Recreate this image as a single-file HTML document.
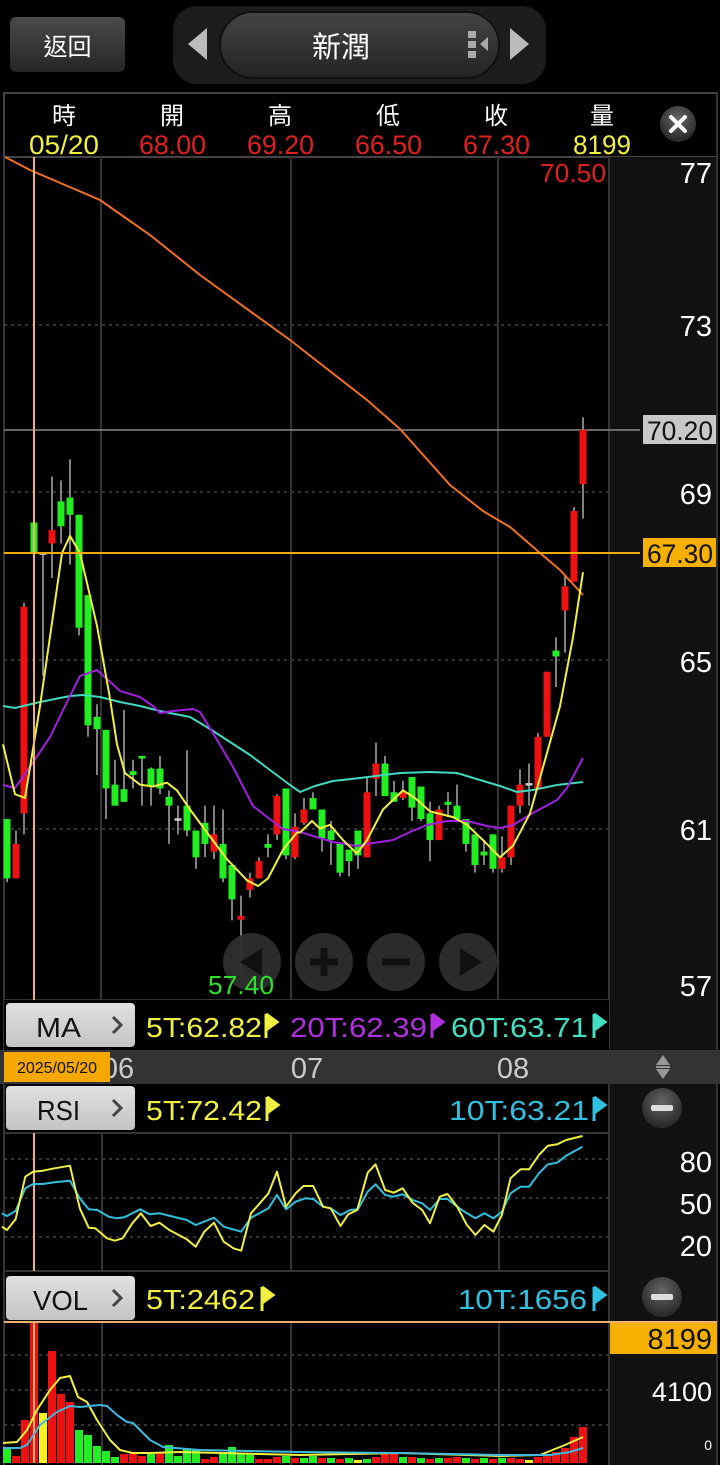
<!DOCTYPE html>
<html><head><meta charset="utf-8">
<style>
html,body{margin:0;padding:0;background:#000;width:720px;height:1465px;overflow:hidden}
body{font-family:"Liberation Sans","Noto Sans CJK TC",sans-serif}
svg text{font-family:"Liberation Sans","Noto Sans CJK TC",sans-serif}
</style></head><body>
<svg id="s" width="720" height="1465" viewBox="0 0 720 1465" xmlns="http://www.w3.org/2000/svg">
<defs>
<linearGradient id="bt" x1="0" y1="0" x2="0" y2="1"><stop offset="0" stop-color="#4a4a4a"/><stop offset="1" stop-color="#262626"/></linearGradient>
<linearGradient id="pill" x1="0" y1="0" x2="0" y2="1"><stop offset="0" stop-color="#454545"/><stop offset="1" stop-color="#232323"/></linearGradient>
<linearGradient id="lb" x1="0" y1="0" x2="0" y2="1"><stop offset="0" stop-color="#e0e0e0"/><stop offset="1" stop-color="#c4c4c4"/></linearGradient>
<radialGradient id="cb" cx="0.5" cy="0.35" r="0.6"><stop offset="0" stop-color="#666"/><stop offset="1" stop-color="#2a2a2a"/></radialGradient>
</defs>
<!-- header -->
<rect x="10" y="17" width="115" height="55" rx="6" fill="url(#bt)"/>
<text x="67.5" y="55" font-size="24" fill="#fff" text-anchor="middle">返回</text>
<rect x="173" y="6" width="373" height="78" rx="24" fill="#1c1c1c"/>
<rect x="220" y="12" width="279" height="66" rx="33" fill="url(#pill)" stroke="#111" stroke-width="2"/>
<polygon points="207,28 207,60 188,44" fill="#bbb"/>
<polygon points="510,28 510,60 529,44" fill="#bbb"/>
<text x="341" y="57" font-size="29" fill="#fff" text-anchor="middle">新潤</text>
<rect x="468" y="31" width="8" height="7" fill="#aaa"/><rect x="468" y="41" width="8" height="7" fill="#aaa"/><rect x="468" y="51" width="8" height="7" fill="#aaa"/>
<polygon points="488,37 488,51 480,44" fill="#aaa"/>
<!-- info row -->
<rect x="4" y="93" width="713" height="64" fill="#000" stroke="#444" stroke-width="2"/>
<g font-size="24" text-anchor="middle" fill="#fff">
<text x="64" y="124">時</text><text x="172" y="124">開</text><text x="280" y="124">高</text><text x="388" y="124">低</text><text x="496" y="124">收</text><text x="602" y="124">量</text>
</g>
<g font-size="27" lengthAdjust="spacingAndGlyphs">
<text x="29" y="154" fill="#f0f040" textLength="70" lengthAdjust="spacingAndGlyphs">05/20</text>
<text x="139" y="154" fill="#e02020" textLength="67" lengthAdjust="spacingAndGlyphs">68.00</text>
<text x="247" y="154" fill="#e02020" textLength="67" lengthAdjust="spacingAndGlyphs">69.20</text>
<text x="355" y="154" fill="#e02020" textLength="67" lengthAdjust="spacingAndGlyphs">66.50</text>
<text x="463" y="154" fill="#e02020" textLength="67" lengthAdjust="spacingAndGlyphs">67.30</text>
<text x="573" y="154" fill="#f0f040" textLength="58" lengthAdjust="spacingAndGlyphs">8199</text>
</g>
<circle cx="678" cy="124" r="18" fill="url(#cb)"/>
<path d="M671,117 L685,131 M685,117 L671,131" stroke="#fff" stroke-width="4" stroke-linecap="round"/>
<!-- right axis panel -->
<rect x="609" y="157" width="108" height="1308" fill="#111"/>
<line x1="609" y1="157" x2="609" y2="1465" stroke="#333" stroke-width="2"/>
<line x1="717" y1="93" x2="717" y2="1465" stroke="#333" stroke-width="2"/>
<line x1="4" y1="157" x2="4" y2="1465" stroke="#333" stroke-width="2"/>
<!-- main grid -->
<g stroke="#444" stroke-width="1.5" stroke-dasharray="3,4">
<line x1="4" y1="325" x2="608" y2="325"/><line x1="4" y1="492" x2="608" y2="492"/><line x1="4" y1="660" x2="608" y2="660"/><line x1="4" y1="829" x2="608" y2="829"/>
</g>
<g stroke="#333" stroke-width="2">
<line x1="101" y1="157" x2="101" y2="1000"/><line x1="291" y1="157" x2="291" y2="1000"/><line x1="498" y1="157" x2="498" y2="1000"/>
<line x1="4" y1="1000" x2="608" y2="1000"/>
</g>
<line x1="4" y1="430" x2="640" y2="430" stroke="#888" stroke-width="1.5"/>
<g id="candles"></g>
<polyline fill="none" stroke="#f07020" stroke-width="2" points="5,157 30,170 100,200 150,235 200,275 290,340 367,400 400,429 450,485 483,511 510,527 540,553 560,570 583,595"/>
<polyline fill="none" stroke="#40d8c0" stroke-width="2" points="3,706 15,708 40,702 70,696 83,695 100,697 120,702 140,706 160,711 190,717 210,729 230,742 250,755 270,770 290,785 300,792 315,786 333,781 360,778 400,773 430,772 457,773 480,780 500,786 517,792 533,790 557,785 583,782"/>
<polyline fill="none" stroke="#a020e0" stroke-width="2" points="3,785 15,788 30,767 50,737 67,702 80,676 97,670 107,679 120,691 140,697 153,706 160,713 173,711 193,709 200,712 213,733 233,767 253,806 267,817 283,829 300,832 313,836 333,842 357,846 367,844 393,840 410,832 427,825 447,821 467,821 487,826 500,828 513,825 533,813 557,800 567,788 583,758"/>
<g id="malines"></g>
<line x1="4" y1="553" x2="640" y2="553" stroke="#f5a800" stroke-width="2"/>
<line x1="34" y1="157" x2="34" y2="1050" stroke="#f0b070" stroke-width="2"/>
<!-- zoom buttons -->
<g fill="#2e2e2e" opacity="0.95">
<circle cx="252" cy="962" r="29"/><circle cx="324" cy="962" r="29"/><circle cx="396" cy="962" r="29"/><circle cx="468" cy="962" r="29"/>
</g>
<polygon points="262,948 262,976 240,962" fill="#111"/>
<path d="M324,948 V976 M310,962 H338" stroke="#111" stroke-width="7"/>
<path d="M382,962 H410" stroke="#111" stroke-width="7"/>
<polygon points="460,948 460,976 482,962" fill="#111"/>
<text x="540" y="182" font-size="26" fill="#e02020" textLength="66" lengthAdjust="spacingAndGlyphs">70.50</text>
<text x="208" y="994" font-size="26" fill="#30e030" textLength="66" lengthAdjust="spacingAndGlyphs">57.40</text>
<!-- right labels -->
<g font-size="29" fill="#fff" text-anchor="end">
<text x="712" y="183">77</text><text x="712" y="336">73</text><text x="712" y="504">69</text><text x="712" y="672">65</text><text x="712" y="840">61</text><text x="712" y="996">57</text>
</g>
<rect x="643" y="415" width="73" height="29" fill="#c8c8c8"/>
<text x="647" y="440" font-size="27" fill="#111" textLength="66" lengthAdjust="spacingAndGlyphs">70.20</text>
<rect x="643" y="538" width="73" height="29" fill="#f5b000"/>
<text x="647" y="563" font-size="27" fill="#111" textLength="66" lengthAdjust="spacingAndGlyphs">67.30</text>
<!-- MA row -->
<rect x="4" y="1000" width="605" height="50" fill="#000"/>
<rect x="6" y="1003" width="129" height="44" rx="4" fill="url(#lb)"/>
<text x="36" y="1037" font-size="28" fill="#111" textLength="45" lengthAdjust="spacingAndGlyphs">MA</text>
<path d="M113,1017 L121,1025 L113,1033" stroke="#444" stroke-width="3" fill="none"/>
<g font-size="28">
<text x="146" y="1037" fill="#f0f040" textLength="116" lengthAdjust="spacingAndGlyphs">5T:62.82</text>
<text x="290" y="1037" fill="#b030e0" textLength="137" lengthAdjust="spacingAndGlyphs">20T:62.39</text>
<text x="451" y="1037" fill="#40e0c0" textLength="137" lengthAdjust="spacingAndGlyphs">60T:63.71</text>
</g>
<path d="M266,1014 V1038 M266,1014 L277,1022 L266,1030" stroke="#f0f040" stroke-width="3" fill="#f0f040"/>
<path d="M432,1014 V1038 M432,1014 L443,1022 L432,1030" stroke="#b030e0" stroke-width="3" fill="#b030e0"/>
<path d="M594,1014 V1038 M594,1014 L605,1022 L594,1030" stroke="#40e0c0" stroke-width="3" fill="#40e0c0"/>
<!-- date bar -->
<rect x="0" y="1050" width="720" height="34" fill="#333"/>
<g font-size="29" fill="#ccc" text-anchor="middle"><text x="118" y="1078">06</text><text x="307" y="1078">07</text><text x="513" y="1078">08</text></g>
<rect x="4" y="1052" width="106" height="30" fill="#f5a800"/>
<text x="57" y="1073" font-size="16" fill="#111" text-anchor="middle">2025/05/20</text>
<polygon points="663,1055 656,1065 670,1065" fill="#999"/><rect x="656" y="1066" width="14" height="2" fill="#999"/><polygon points="663,1079 656,1069 670,1069" fill="#999"/>
<!-- RSI row -->
<rect x="6" y="1086" width="129" height="44" rx="4" fill="url(#lb)"/>
<text x="37" y="1120" font-size="28" fill="#111" textLength="43" lengthAdjust="spacingAndGlyphs">RSI</text>
<path d="M113,1100 L121,1108 L113,1116" stroke="#444" stroke-width="3" fill="none"/>
<text x="146" y="1120" font-size="28" fill="#f0f040" textLength="116" lengthAdjust="spacingAndGlyphs">5T:72.42</text>
<text x="449" y="1120" font-size="28" fill="#30c0e0" textLength="140" lengthAdjust="spacingAndGlyphs">10T:63.21</text>
<path d="M267,1097 V1121 M267,1097 L278,1105 L267,1113" stroke="#f0f040" stroke-width="3" fill="#f0f040"/>
<path d="M594,1097 V1121 M594,1097 L605,1105 L594,1113" stroke="#30c0e0" stroke-width="3" fill="#30c0e0"/>
<circle cx="662" cy="1108" r="20" fill="url(#cb)"/><rect x="651" y="1105" width="22" height="6" rx="2" fill="#ddd"/>
<line x1="4" y1="1133" x2="608" y2="1133" stroke="#333" stroke-width="2"/>
<line x1="4" y1="1271" x2="608" y2="1271" stroke="#333" stroke-width="2"/>
<g stroke="#444" stroke-width="1.5" stroke-dasharray="3,4">
<line x1="4" y1="1159" x2="608" y2="1159"/><line x1="4" y1="1198" x2="608" y2="1198"/><line x1="4" y1="1237" x2="608" y2="1237"/>
</g>
<g stroke="#333" stroke-width="2"><line x1="102" y1="1133" x2="102" y2="1271"/><line x1="291" y1="1133" x2="291" y2="1271"/><line x1="499" y1="1133" x2="499" y2="1271"/></g>
<line x1="34" y1="1133" x2="34" y2="1271" stroke="#f0b070" stroke-width="2"/>
<g id="rsi"></g>
<g font-size="29" fill="#fff" text-anchor="end"><text x="712" y="1172">80</text><text x="712" y="1214">50</text><text x="712" y="1256">20</text></g>
<!-- VOL row -->
<rect x="6" y="1276" width="129" height="44" rx="4" fill="url(#lb)"/>
<text x="33" y="1310" font-size="28" fill="#111" textLength="55" lengthAdjust="spacingAndGlyphs">VOL</text>
<path d="M113,1290 L121,1298 L113,1306" stroke="#444" stroke-width="3" fill="none"/>
<text x="146" y="1309" font-size="28" fill="#f0f040" textLength="109" lengthAdjust="spacingAndGlyphs">5T:2462</text>
<text x="458" y="1309" font-size="28" fill="#30c0e0" textLength="129" lengthAdjust="spacingAndGlyphs">10T:1656</text>
<path d="M262,1287 V1311 M262,1287 L273,1295 L262,1303" stroke="#f0f040" stroke-width="3" fill="#f0f040"/>
<path d="M594,1287 V1311 M594,1287 L605,1295 L594,1303" stroke="#30c0e0" stroke-width="3" fill="#30c0e0"/>
<circle cx="662" cy="1297" r="20" fill="url(#cb)"/><rect x="651" y="1294" width="22" height="6" rx="2" fill="#ddd"/>
<g stroke="#444" stroke-width="1.5" stroke-dasharray="3,4">
<line x1="4" y1="1355" x2="608" y2="1355"/><line x1="4" y1="1390" x2="608" y2="1390"/><line x1="4" y1="1425" x2="608" y2="1425"/>
</g>
<g stroke="#333" stroke-width="2"><line x1="102" y1="1322" x2="102" y2="1465"/><line x1="291" y1="1322" x2="291" y2="1465"/><line x1="499" y1="1322" x2="499" y2="1465"/></g>
<g id="vol"></g>
<line x1="4" y1="1322" x2="717" y2="1322" stroke="#f0b070" stroke-width="2"/>
<rect x="610" y="1323" width="107" height="31" fill="#f5b000"/>
<text x="712" y="1349" font-size="29" fill="#111" text-anchor="end">8199</text>
<text x="712" y="1401" font-size="27" fill="#fff" text-anchor="end">4100</text>
<text x="712" y="1450" font-size="14" fill="#fff" text-anchor="end">0</text>
</svg>
<script>
var NS="http://www.w3.org/2000/svg";
function el(p,t,a){var e=document.createElementNS(NS,t);for(var k in a)e.setAttribute(k,a[k]);p.appendChild(e);return e;}
var Y=function(z){return 400+z*0.3827;};
var C=[[7,1095,1250,1095,1260,'g'],[16,1160,1250,1125,1250,'r'],[24,540,1080,530,1135,'r'],[34,320,400,320,400,'g'],[43,398,404,400,720,'w'],[52,340,375,200,465,'r'],[61,265,330,210,375,'g'],[70,255,300,155,430,'g'],[79,300,595,300,615,'g'],[88,510,850,510,880,'g'],[97,828,860,795,980,'g'],[106,862,1015,862,1095,'g'],[115,1005,1060,940,1060,'g'],[124,1017,1050,810,1050,'g'],[133,970,980,940,1015,'g'],[142,930,937,930,1060,'g'],[151,963,1010,960,1060,'g'],[160,963,1015,930,1030,'g'],[169,1037,1060,1020,1160,'g'],[178,1093,1097,1060,1135,'w'],[187,1060,1125,915,1140,'g'],[196,1125,1195,1125,1225,'g'],[205,1105,1160,1060,1195,'g'],[214,1135,1180,1060,1200,'r'],[223,1160,1250,1070,1260,'g'],[232,1215,1305,1215,1360,'g'],[241,1348,1358,1295,1490,'r'],[250,1250,1280,1235,1300,'r'],[259,1205,1250,1195,1250,'r'],[268,1160,1170,1135,1195,'g'],[277,1035,1135,1030,1150,'r'],[286,1015,1190,1015,1200,'g'],[295,1115,1195,1080,1200,'r'],[304,1070,1105,1040,1110,'r'],[313,1040,1070,1025,1070,'g'],[322,1070,1145,1070,1180,'g'],[331,1125,1150,1100,1215,'g'],[340,1160,1235,1160,1245,'g'],[349,1175,1205,1175,1245,'g'],[358,1125,1190,1125,1225,'g'],[367,1025,1195,985,1195,'r'],[376,950,990,895,1035,'r'],[385,950,1035,930,1035,'g'],[394,1025,1050,995,1050,'g'],[403,1025,1040,995,1045,'r'],[412,985,1065,985,1100,'g'],[421,1010,1095,1010,1100,'g'],[430,1080,1150,1050,1205,'g'],[439,1070,1150,1060,1150,'r'],[448,1050,1058,1025,1090,'g'],[457,1060,1095,1005,1095,'g'],[466,1095,1160,1095,1180,'g'],[475,1135,1215,1135,1235,'g'],[484,1180,1190,1150,1215,'g'],[493,1135,1225,1135,1235,'g'],[502,1195,1225,1140,1235,'r'],[511,1060,1195,1060,1215,'r'],[520,1005,1060,965,1080,'r'],[529,1001,1005,950,1060,'w'],[538,880,1015,870,1015,'r'],[547,710,880,710,880,'r'],[556,655,670,620,750,'g'],[565,487,550,460,660,'r'],[574,290,475,280,475,'r'],[583,78,220,45,310,'r']];
var col={g:'#22ee22',r:'#ee1111',w:'#cccccc',y:'#f8f020'};
var cg=document.getElementById('candles');
C.forEach(function(c){
 el(cg,'line',{x1:c[0],x2:c[0],y1:Y(c[3]),y2:Y(c[4]),stroke:'#aaa','stroke-width':1.5});
 var t=Y(c[1]),b=Y(c[2]);if(b-t<2.5){b=t+2.5;}
 el(cg,'rect',{x:c[0]-3.5,y:t,width:7,height:b-t,fill:col[c[5]]});
});
var mg=document.getElementById('malines');
function pl(g,pts,color,w){el(g,'polyline',{points:pts,fill:'none',stroke:color,'stroke-width':w||2,'stroke-linejoin':'round'});}
function Z(s){return s.trim().split(/\s+/).map(function(p){var a=p.split(',');return a[0]+','+Y(+a[1]).toFixed(1);}).join(' ');}
pl(mg,Z("3,900 15,1030 25,1040 40,800 62,400 70,355 80,400 97,590 110,780 117,900 125,975 140,1005 153,1010 167,1000 177,1020 190,1070 207,1130 227,1200 247,1255 258,1270 268,1250 283,1175 297,1130")+" "+Z("300,1130 312,1100 320,1120 330,1110 343,1150 357,1185 367,1150 383,1070 403,1020 415,1040 430,1075 453,1090 467,1110 483,1150 500,1195 513,1165 530,1080 543,960 560,800 573,620 583,450"),'#f0f040');
function R(s){return s.trim().split(/\s+/).map(function(p){var a=p.split(',');return (+a[0]/2.57).toFixed(1)+','+(1130+ +a[1]/3).toFixed(1);}).join(' ');}
var rg=document.getElementById('rsi');
pl(rg,R("5,250 18,258 40,243 65,175 85,162 110,162 140,157 180,152 205,205 228,238 250,240 280,260 300,265 320,262 360,238 385,253 410,250 480,270 503,285 550,263 575,290 620,305 645,263 690,235 712,195 735,238 760,215 785,205 805,207 830,230 850,235 875,255 900,240 920,238 945,185 965,163 990,195 1010,200 1035,193 1060,210 1085,220 1105,240 1130,207 1150,207 1175,230 1200,250 1222,265 1245,250 1268,265 1290,245 1312,190 1338,170 1360,170 1385,130 1408,103 1432,98 1455,77 1497,50"),'#30c0e0');
pl(rg,R("5,290 18,300 40,268 65,140 85,125 110,122 140,115 180,107 205,235 228,293 245,295 275,325 295,332 315,325 340,280 362,250 387,288 410,278 435,300 480,328 503,350 525,305 550,278 575,335 600,355 620,362 645,250 690,190 712,125 735,230 760,190 780,168 805,168 830,230 850,235 875,288 895,253 918,240 945,128 965,103 990,180 1012,188 1035,175 1060,218 1085,240 1105,280 1130,200 1150,192 1175,230 1200,285 1222,315 1245,285 1268,305 1290,255 1312,145 1338,118 1360,118 1385,75 1408,47 1432,43 1455,30 1497,18"),'#f0f040');
// VOL
var vg=document.getElementById('vol');
var V=[[1449,'g'],[1456,'r'],[1420,'r'],[1323,'r'],[1413,'y'],[1351,'r'],[1394,'r'],[1402,'r'],[1430,'g'],[1435,'g'],[1446,'g'],[1451,'g'],[1457,'g'],[1454,'r'],[1452,'r'],[1456,'r'],[1454,'g'],[1453,'r'],[1445,'g'],[1456,'g'],[1449,'g'],[1449,'g'],[1459,'r'],[1457,'r'],[1453,'g'],[1447,'g'],[1453,'g'],[1453,'g'],[1459,'r'],[1459,'r'],[1457,'r'],[1456,'g'],[1458,'r'],[1458,'g'],[1456,'g'],[1458,'r'],[1458,'g'],[1459,'r'],[1458,'g'],[1460,'y'],[1459,'g'],[1457,'r'],[1453,'r'],[1452,'r'],[1457,'g'],[1457,'r'],[1458,'g'],[1459,'r'],[1458,'g'],[1458,'r'],[1457,'r'],[1458,'g'],[1459,'r'],[1458,'g'],[1459,'r'],[1458,'g'],[1458,'r'],[1459,'r'],[1460,'y'],[1457,'r'],[1455,'r'],[1452,'r'],[1448,'r'],[1437,'r'],[1427,'r'],[1430,'r']];
V.forEach(function(v,i){var x=3+i*9;if(x>583)return;el(vg,'rect',{x:x,y:v[0],width:8,height:1463-v[0],fill:col[v[1]]});});
el(vg,'line',{x1:34,x2:34,y1:1322,y2:1463,stroke:'#f0b070','stroke-width':2});
pl(vg,"3,1443 17,1442 27,1430 37,1410 50,1390 60,1378 70,1376 78,1397 87,1402 97,1420 110,1440 120,1450 133,1453 150,1453 180,1452 300,1455 400,1453 500,1456 540,1455 565,1445 583,1437",'#f0f040');
pl(vg,"3,1448 20,1448 27,1445 40,1425 57,1412 70,1406 80,1407 100,1405 107,1406 117,1415 127,1422 133,1423 150,1440 163,1447 200,1450 300,1452 400,1453 500,1455 550,1455 570,1452 583,1448",'#40b8e0');
</script>
</body></html>
